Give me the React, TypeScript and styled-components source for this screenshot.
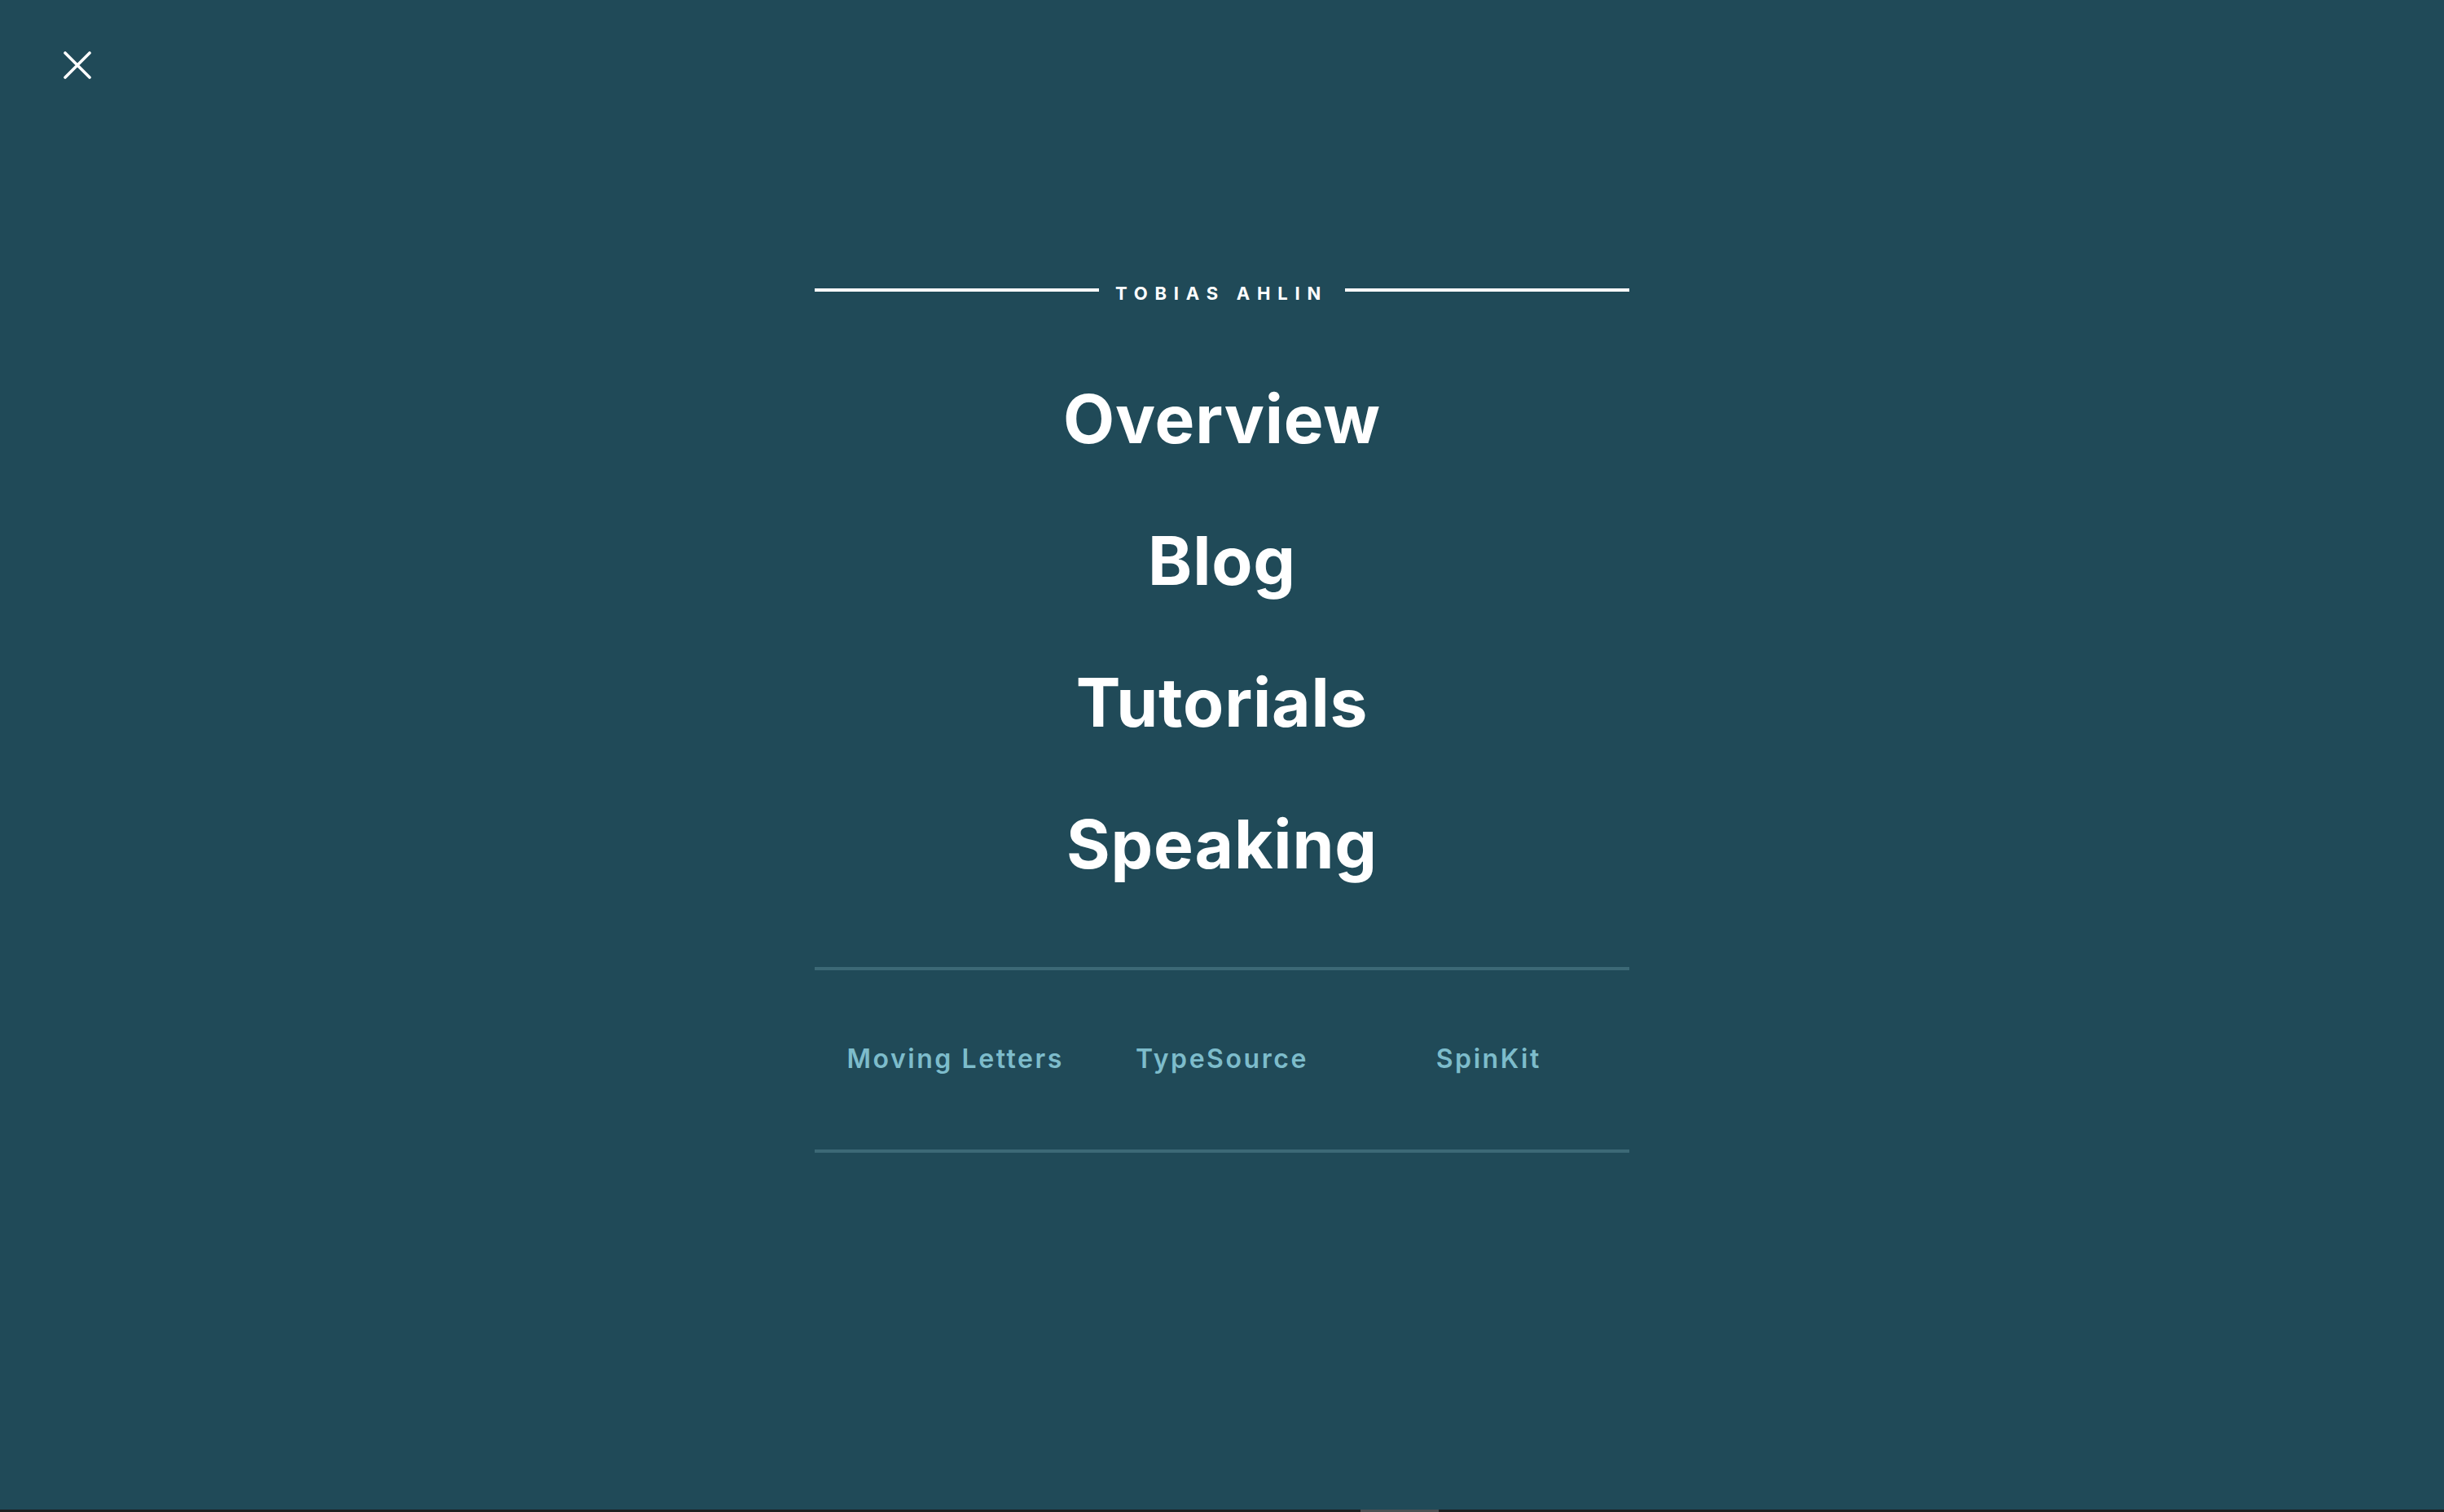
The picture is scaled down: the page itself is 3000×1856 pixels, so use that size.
import React from "react";
import styled, { createGlobalStyle } from "styled-components";

const Global = createGlobalStyle`
  html, body { margin: 0; padding: 0; background: #204a58; }
  body { font-family: Inter, "Noto Sans", "Liberation Sans", sans-serif; -webkit-font-smoothing: antialiased; }
  * { box-sizing: border-box; }
`;

const Page = styled.div`
  min-height: 100vh;
  display: flex;
  flex-direction: column;
  background: #204a58;
  color: #ffffff;
`;

const Main = styled.div`
  flex: 1;
  display: flex;
  flex-direction: column;
`;

const TopBar = styled.div`
  display: flex;
  padding: 63px 0 0 78px;
`;

const CloseButton = styled.button`
  width: 34px;
  height: 34px;
  padding: 0;
  border: 0;
  background: transparent;
  cursor: pointer;
  display: block;
  svg { display: block; }
`;

const Nav = styled.nav`
  width: 1000px;
  margin: 252px auto 0;
  display: flex;
  flex-direction: column;
`;

const Header = styled.div`
  display: flex;
  align-items: flex-start;
`;

const HeaderLine = styled.span`
  flex: 1;
  height: 4px;
  margin-top: 5px;
  background: #ffffff;
`;

const HeaderTitle = styled.span`
  font-size: 22px;
  line-height: 22px;
  font-weight: 700;
  letter-spacing: 0.4em;
  margin: 0 21px 0 20px;
  white-space: nowrap;
`;

const MenuList = styled.ul`
  list-style: none;
  margin: 103px 0 0;
  padding: 0;
  display: flex;
  flex-direction: column;
  align-items: center;
  gap: 92px;
`;

const MenuItem = styled.li`
  font-size: 82px;
  line-height: 82px;
  font-weight: 700;
  letter-spacing: 0.01em;
  color: #ffffff;
`;

const Divider = styled.div<{ $top?: number }>`
  height: 4px;
  background: #3c6976;
  margin-top: ${(p) => p.$top ?? 0}px;
`;

const Links = styled.div`
  display: grid;
  grid-template-columns: repeat(3, 1fr);
  padding: 93px 9px 95px;
`;

const LinkItem = styled.a`
  text-align: center;
  font-size: 32px;
  line-height: 32px;
  font-weight: 600;
  letter-spacing: 0.08em;
  color: #7dbccb;
  text-decoration: none;
`;

const BottomStrip = styled.div`
  height: 3px;
  background: #1e1f20;
  display: flex;
  justify-content: flex-start;
`;

const ScrollThumb = styled.div`
  width: 96px;
  height: 3px;
  margin-left: 1670px;
  background: #4d4f52;
`;

export default function App() {
  const items = ["Overview", "Blog", "Tutorials", "Speaking"];
  const links = ["Moving Letters", "TypeSource", "SpinKit"];
  return (
    <Page>
      <Global />
      <Main>
        <TopBar>
          <CloseButton aria-label="Close">
            <svg width="34" height="34" viewBox="0 0 34 34">
              <path d="M2 2 L32 32 M32 2 L2 32" stroke="#ffffff" strokeWidth="3.6" strokeLinecap="round" fill="none" />
            </svg>
          </CloseButton>
        </TopBar>
        <Nav>
          <Header>
            <HeaderLine />
            <HeaderTitle>TOBIAS AHLIN</HeaderTitle>
            <HeaderLine />
          </Header>
          <MenuList>
            {items.map((t) => (
              <MenuItem key={t}>{t}</MenuItem>
            ))}
          </MenuList>
          <Divider $top={109} />
          <Links>
            {links.map((l) => (
              <LinkItem key={l} href="#">{l}</LinkItem>
            ))}
          </Links>
          <Divider />
        </Nav>
      </Main>
      <BottomStrip>
        <ScrollThumb />
      </BottomStrip>
    </Page>
  );
}
